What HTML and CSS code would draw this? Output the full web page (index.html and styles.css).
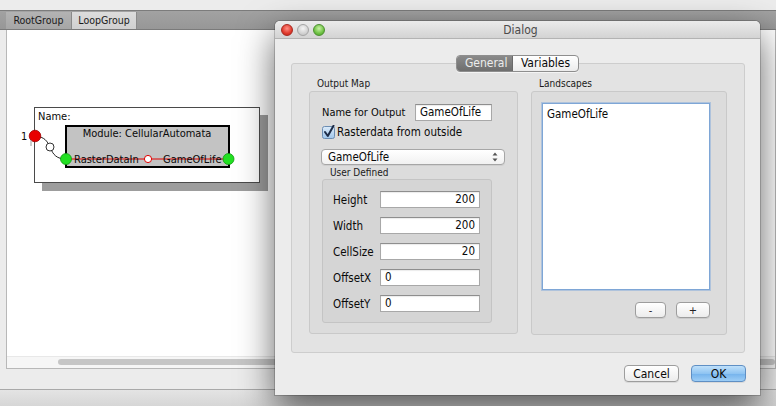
FILE: index.html
```html
<!DOCTYPE html>
<html>
<head>
<meta charset="utf-8">
<link rel="stylesheet" href="styles.css">
</head>
<body>
<div class="app">
  <div class="tabstrip">
    <div class="tab">RootGroup</div>
    <div class="tab active">LoopGroup</div>
  </div>
  <div class="canvas">
    <svg class="diagram" width="270" height="170" viewBox="7 31 270 170">
      <rect x="42" y="116" width="226" height="76" fill="#9d9d9d"/>
      <rect x="34.5" y="108.5" width="225" height="75" fill="#fff" stroke="#4a4a4a"/>
      <text x="38" y="121" class="dtext">Name:</text>
      <rect x="66" y="127" width="163" height="41" fill="#c3c3c3" stroke="#000" stroke-width="2"/>
      <text x="147" y="138" class="dtext" text-anchor="middle">Module: CellularAutomata</text>
      <path d="M35 137 C45 138 47 142 50 148 C53 156 57 160 66 160" fill="none" stroke="#222" stroke-width="1"/>
      <line x1="66" y1="160" x2="229" y2="160" stroke="#e00000" stroke-width="1"/>
      <text x="74" y="163.5" class="dtext">RasterDataIn</text>
      <text x="163" y="163.5" class="dtext">GameOfLife</text>
      <circle cx="148" cy="160" r="3.6" fill="#fff" stroke="#e00000"/>
      <circle cx="66" cy="160" r="5.5" fill="#22e022" stroke="#119911" stroke-width="0.8"/>
      <circle cx="228.5" cy="160" r="5.5" fill="#22e022" stroke="#119911" stroke-width="0.8"/>
      <circle cx="50" cy="148" r="4" fill="#fff" stroke="#333"/>
      <circle cx="35" cy="137" r="5.8" fill="#e80000" stroke="#a00000" stroke-width="0.8"/>
      <text x="21" y="141" class="dtext">1</text>
      <line x1="31" y1="141" x2="31" y2="147" stroke="#999" stroke-width="1"/>
    </svg>
    <div class="hscroll"><div class="thumb"></div></div>
  </div>
  <div class="gap-area"></div>
  <div class="statusbar"></div>
</div>

<div class="dialog">
  <div class="titlebar">
    <div class="lights">
      <span class="light red"></span>
      <span class="light gray"></span>
      <span class="light green"></span>
    </div>
    <div class="title">Dialog</div>
  </div>
  <div class="dbody">
    <div class="seg">
      <span class="seg-item on">General</span>
      <span class="seg-item">Variables</span>
    </div>
    <div class="panel">
      <div class="col col-left">
        <div class="glabel">Output Map</div>
        <div class="gbox outmap">
          <div class="name-row">
            <span class="lbl name-lbl">Name for Output</span>
            <span class="field name-field">GameOfLife</span>
          </div>
          <div class="check-row">
            <svg class="checkbox" width="14" height="14" viewBox="0 0 14 14">
              <defs>
                <linearGradient id="cb" x1="0" y1="0" x2="0" y2="1">
                  <stop offset="0" stop-color="#dcebf9"/>
                  <stop offset="1" stop-color="#9fc6ec"/>
                </linearGradient>
              </defs>
              <rect x="0.5" y="1.5" width="12" height="12" rx="2" fill="url(#cb)" stroke="#6c8db2"/>
              <path d="M3 7 L5.8 11 L11.5 0.8" fill="none" stroke="#1d2c48" stroke-width="2" stroke-linecap="round" stroke-linejoin="round"/>
            </svg>
            <span class="lbl">Rasterdata from outside</span>
          </div>
          <div class="select">
            <span>GameOfLife</span>
            <svg width="6" height="10" viewBox="0 0 6 10">
              <path d="M0.5 3.5 L3 0.5 L5.5 3.5 Z M0.5 6.5 L3 9.5 L5.5 6.5 Z" fill="#555"/>
            </svg>
          </div>
          <div class="glabel sub">User Defined</div>
          <div class="gbox ud">
            <div class="ud-row"><span class="lbl ud-lbl">Height</span><span class="field num">200</span></div>
            <div class="ud-row"><span class="lbl ud-lbl">Width</span><span class="field num">200</span></div>
            <div class="ud-row"><span class="lbl ud-lbl">CellSize</span><span class="field num">20</span></div>
            <div class="ud-row"><span class="lbl ud-lbl">OffsetX</span><span class="field">0</span></div>
            <div class="ud-row"><span class="lbl ud-lbl">OffsetY</span><span class="field">0</span></div>
          </div>
        </div>
      </div>
      <div class="col col-right">
        <div class="glabel">Landscapes</div>
        <div class="gbox land">
          <div class="list"><div class="item">GameOfLife</div></div>
          <div class="pm">
            <span class="btn minus">-</span>
            <span class="btn plus">+</span>
          </div>
        </div>
      </div>
    </div>
    <div class="footer">
      <span class="btn big">Cancel</span>
      <span class="btn big ok">OK</span>
    </div>
  </div>
</div>
</body>
</html>
```

FILE: styles.css
```css
* { box-sizing: border-box; }

html, body {
  margin: 0;
  padding: 0;
}

body {
  width: 776px;
  height: 406px;
  overflow: hidden;
  position: relative;
  background: #ececec;
  font-family: "DejaVu Sans Condensed", "DejaVu Sans", sans-serif;
  font-size: 11px;
  color: #0a0a0a;
}

/* ---------- background window ---------- */
.app {
  padding-top: 10px;
  display: flex;
  flex-direction: column;
  height: 406px;
}

.tabstrip {
  height: 20px;
  flex: none;
  background: linear-gradient(#a2a2a2, #979797);
  border-top: 1px solid #7c7c7c;
  border-bottom: 1px solid #7a7a7a;
  display: flex;
  align-items: flex-end;
  padding-left: 6px;
}

.tab {
  height: 17px;
  width: 66px;
  background: linear-gradient(#b3b3b3, #a6a6a6);
  border-right: 1px solid #7f7f7f;
  text-align: center;
  line-height: 17px;
  font-size: 10.5px;
  color: #1a1a1a;
}

.tab.active {
  width: 66px;
  background: linear-gradient(#dcdcdc, #d0d0d0);
  border-left: 1px solid #8a8a8a;
  border-right: 1px solid #8a8a8a;
  margin-left: -1px;
}

.canvas {
  position: relative;
  flex: none;
  height: 339px;
  margin-left: 6px;
  background: #fff;
  border: 1px solid #b8b8b8;
  border-top: none;
  display: flex;
  flex-direction: column;
  justify-content: flex-end;
}

.diagram {
  position: absolute;
  left: 0;
  top: 0;
  overflow: visible;
}

.dtext {
  font-family: "DejaVu Sans Condensed", "DejaVu Sans", sans-serif;
  font-size: 11px;
  fill: #0a0a0a;
}

.hscroll {
  height: 12px;
  background: #f6f6f6;
  border-top: 1px solid #e8e8e8;
  padding: 2px 0 0 51px;
}

.thumb {
  height: 6px;
  background: #c6c6c6;
  border-radius: 3px;
}

.gap-area {
  height: 20px;
  flex: none;
  background: #ececec;
}

.statusbar {
  flex: 1;
  border-top: 1px solid #a9a9a9;
  background: linear-gradient(#e4e4e4, #d6d6d6);
}

/* ---------- dialog ---------- */
.dialog {
  position: absolute;
  left: 275px;
  top: 21px;
  width: 485px;
  height: 374px;
  background: #ececec;
  border-radius: 5px 5px 0 0;
  box-shadow: 0 14px 36px rgba(0, 0, 0, 0.62), 0 0 0 1px rgba(0, 0, 0, 0.18);
  display: flex;
  flex-direction: column;
}

.titlebar {
  height: 18px;
  flex: none;
  position: relative;
  background: linear-gradient(#ebebeb, #d3d3d3);
  border-bottom: 1px solid #b3b3b3;
  border-radius: 5px 5px 0 0;
  display: flex;
  align-items: center;
  justify-content: center;
}

.lights {
  position: absolute;
  left: 6px;
  top: 3px;
  display: flex;
  gap: 4px;
}

.light {
  width: 12px;
  height: 12px;
  border-radius: 50%;
  display: block;
}

.light.red {
  background: radial-gradient(circle at 50% 35%, #ff8f85, #e0392c 60%, #b8261c);
  border: 1px solid #a8281f;
}

.light.gray {
  background: radial-gradient(circle at 50% 35%, #f4f4f4, #d2d2d2 60%, #bdbdbd);
  border: 1px solid #a5a5a5;
}

.light.green {
  background: radial-gradient(circle at 50% 35%, #c9f2a6, #6ec243 60%, #4b9a2a);
  border: 1px solid #4c8f30;
}

.title {
  font-size: 12px;
  color: #4b4b4b;
  padding-left: 6px;
}

.dbody {
  flex: 1;
  padding: 16px 15px 0 16px;
  display: flex;
  flex-direction: column;
}

.seg {
  align-self: center;
  margin-left: -1px;
  position: relative;
  z-index: 2;
  height: 17px;
  display: flex;
  border: 1px solid #8e8e8e;
  border-radius: 4px;
  overflow: hidden;
  margin-bottom: -9px;
  background: linear-gradient(#ffffff, #ececec);
  box-shadow: 0 1px 0 rgba(255, 255, 255, 0.6);
}

.seg-item {
  height: 15px;
  line-height: 14px;
  font-size: 12px;
  padding: 0 8px;
  color: #0a0a0a;
}

.seg-item.on {
  width: 56px;
  text-align: center;
  background: linear-gradient(#8a8a8a, #6e6e6e);
  color: #ececec;
  border-right: 1px solid #6a6a6a;
}

.panel {
  height: 290px;
  flex: none;
  background: #e3e3e3;
  border: 1px solid #cdcdcd;
  border-radius: 3px;
  padding: 13px 17px 18px 17px;
  display: flex;
  gap: 13px;
}

.col {
  display: flex;
  flex-direction: column;
}

.col-left { width: 209px; }
.col-right { width: 196px; }

.glabel {
  height: 14px;
  line-height: 13px;
  font-size: 10px;
  padding-left: 8px;
  color: #1a1a1a;
  flex: none;
}

.gbox {
  flex: 1;
  background: #dcdcdc;
  border: 1px solid #c9c9c9;
  border-radius: 3px;
  display: flex;
  flex-direction: column;
}

.outmap {
  padding: 12px 12px 10px 12px;
}

.name-row {
  display: flex;
  align-items: center;
  height: 17px;
}

.lbl {
  font-size: 11.5px;
  color: #0a0a0a;
  white-space: nowrap;
}

.name-lbl {
  width: 93px;
  font-size: 11px;
}

.field {
  display: block;
  height: 17px;
  background: #fff;
  border: 1px solid #a8a8a8;
  border-top-color: #8e8e8e;
  box-shadow: inset 0 1px 1px rgba(0, 0, 0, 0.08);
  font-size: 11.5px;
  line-height: 15px;
  padding: 0 4px;
  color: #0a0a0a;
}

.name-field {
  width: 77px;
}

.check-row {
  margin-top: 4px;
  height: 14px;
  display: flex;
  align-items: center;
  gap: 1px;
}

.checkbox {
  flex: none;
}

.select {
  margin-top: 10px;
  margin-left: -1px;
  width: 184px;
  height: 16px;
  border: 1px solid #a6a6a6;
  border-radius: 4px;
  background: linear-gradient(#ffffff, #f1f1f1);
  box-shadow: 0 1px 0 rgba(0, 0, 0, 0.06);
  display: flex;
  align-items: center;
  justify-content: space-between;
  padding: 0 6px 0 6px;
  font-size: 11.5px;
}

.glabel.sub {
  margin-top: 0;
  height: 14px;
  line-height: 15px;
  padding-left: 8px;
}

.ud {
  flex: none;
  width: 170px;
  height: 144px;
  background: #d5d5d5;
  border-color: #c4c4c4;
  padding: 11px 11px 10px 10px;
  gap: 9px;
}

.ud-row {
  display: flex;
  align-items: center;
  height: 17px;
}

.ud-lbl {
  width: 47px;
}

.ud-row .field {
  width: 100px;
}

.field.num {
  text-align: right;
}

.land {
  padding: 11px 16px 16px 10px;
}

.list {
  height: 187px;
  background: #fff;
  border: 1px solid #7ea6d6;
  box-shadow: 0 0 0 1px rgba(120, 165, 220, 0.45);
  padding: 3px 4px;
}

.item {
  font-size: 11.5px;
  line-height: 14px;
}

.pm {
  margin-top: 12px;
  display: flex;
  justify-content: flex-end;
  gap: 10px;
}

.btn {
  display: flex;
  align-items: center;
  justify-content: center;
  height: 16px;
  border: 1px solid #9d9d9d;
  border-radius: 4px;
  background: linear-gradient(#ffffff, #ececec);
  box-shadow: 0 1px 0 rgba(0, 0, 0, 0.08);
  font-size: 11px;
  color: #222;
}

.btn.minus { width: 31px; }
.btn.plus { width: 34px; }

.footer {
  margin-top: 12px;
  margin-right: -1px;
  display: flex;
  justify-content: flex-end;
  gap: 12px;
}

.btn.big {
  width: 55px;
  height: 17px;
  font-size: 12px;
  color: #0a0a0a;
}

.btn.ok {
  background: linear-gradient(#bfe0fa, #8fc4f2 50%, #74b2ec 51%, #9ccdf6);
  border-color: #5f8fc4;
}
```
